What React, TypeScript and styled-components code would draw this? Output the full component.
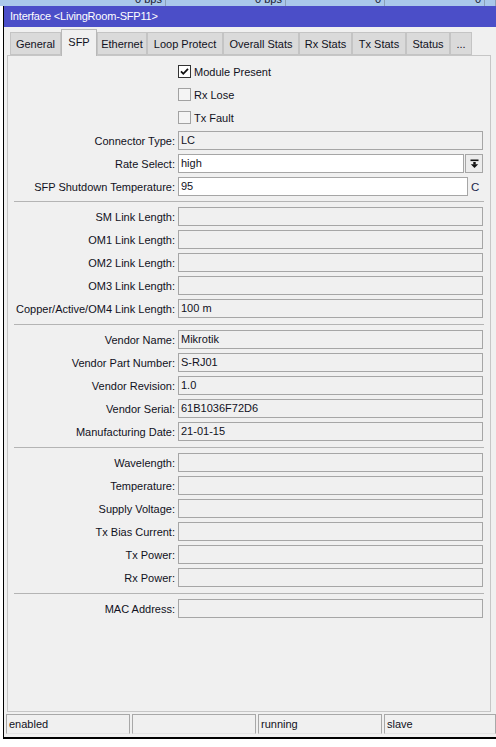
import React from "react";
import styled, { createGlobalStyle } from "styled-components";

const GlobalStyle = createGlobalStyle`
  html, body {
    margin: 0;
    padding: 0;
    background: #ffffff;
  }
  body {
    font-family: "Liberation Sans", Arial, sans-serif;
    font-size: 11px;
    color: #111122;
  }
`;

type Field = { label: string; value?: string; editable?: boolean; kind?: "select" | "unit"; unit?: string };

const checks = [
  { label: "Module Present", checked: true },
  { label: "Rx Lose", checked: false },
  { label: "Tx Fault", checked: false },
];

const groups: Field[][] = [
  [
    { label: "Connector Type", value: "LC" },
    { label: "Rate Select", value: "high", editable: true, kind: "select" },
    { label: "SFP Shutdown Temperature", value: "95", editable: true, kind: "unit", unit: "C" },
  ],
  [
    { label: "SM Link Length" },
    { label: "OM1 Link Length" },
    { label: "OM2 Link Length" },
    { label: "OM3 Link Length" },
    { label: "Copper/Active/OM4 Link Length", value: "100 m" },
  ],
  [
    { label: "Vendor Name", value: "Mikrotik" },
    { label: "Vendor Part Number", value: "S-RJ01" },
    { label: "Vendor Revision", value: "1.0" },
    { label: "Vendor Serial", value: "61B1036F72D6" },
    { label: "Manufacturing Date", value: "21-01-15" },
  ],
  [
    { label: "Wavelength" },
    { label: "Temperature" },
    { label: "Supply Voltage" },
    { label: "Tx Bias Current" },
    { label: "Tx Power" },
    { label: "Rx Power" },
  ],
  [{ label: "MAC Address" }],
];

// space above each group's divider line (first group has none)
const sepHeights = [0, 7, 8, 8, 8];

const tabs = [
  { name: "General", w: 51 },
  { name: "SFP", w: 36 },
  { name: "Ethernet", w: 50 },
  { name: "Loop Protect", w: 76 },
  { name: "Overall Stats", w: 76 },
  { name: "Rx Stats", w: 53 },
  { name: "Tx Stats", w: 54 },
  { name: "Status", w: 44 },
  { name: "...", w: 22 },
];

const backCells = [
  { w: 166, text: "0 bps" },
  { w: 120, text: "0 bps" },
  { w: 99, text: "0" },
  { w: 100, text: "0" },
  { w: 11, text: "" },
];

const statusCells = ["enabled", "", "running", "slave"];

const App: React.FC = () => {
  return (
    <Page>
      <GlobalStyle />
      <BackStrip>
        {backCells.map((c, i) => (
          <BackCell key={i} $w={c.w}>
            <span>{c.text}</span>
          </BackCell>
        ))}
      </BackStrip>
      <Window>
        <TitleBar>Interface &lt;LivingRoom-SFP11&gt;</TitleBar>
        <TabStrip>
          {tabs.map((t) => (
            <Tab key={t.name} $w={t.w} $active={t.name === "SFP"}>
              {t.name}
            </Tab>
          ))}
        </TabStrip>
        <Panel>
          {checks.map((c) => (
            <CheckRow key={c.label}>
              <CheckBox $checked={c.checked}>
                {c.checked && (
                  <svg width="11" height="11" viewBox="0 0 11 11">
                    <path d="M2 5.4 L4.3 7.8 L9 2.8" fill="none" stroke="#111" strokeWidth="1.8" />
                  </svg>
                )}
              </CheckBox>
              <CheckLabel>{c.label}</CheckLabel>
            </CheckRow>
          ))}
          {groups.map((g, gi) => (
            <React.Fragment key={gi}>
              {gi > 0 && <Separator $h={sepHeights[gi]} />}
              {g.map((f) => (
                <FormRow key={f.label}>
                  <Label>{f.label}:</Label>
                  <FieldWrap>
                    <Input $editable={!!f.editable}>{f.value}</Input>
                    {f.kind === "select" && (
                      <DropButton>
                        <svg width="9" height="10" viewBox="0 0 9 10">
                          <rect x="0.5" y="0.5" width="8" height="1.6" fill="#111" />
                          <rect x="3.3" y="3" width="2.4" height="2.5" fill="#111" />
                          <path d="M0.8 5.2 L8.2 5.2 L4.5 9 Z" fill="#111" />
                        </svg>
                      </DropButton>
                    )}
                    {f.kind === "unit" && <Unit>{f.unit}</Unit>}
                  </FieldWrap>
                </FormRow>
              ))}
            </React.Fragment>
          ))}
        </Panel>
        <StatusBar>
          {statusCells.map((s, i) => (
            <StatusCell key={i}>{s}</StatusCell>
          ))}
        </StatusBar>
      </Window>
    </Page>
  );
};

export default App;

const Page = styled.div`
  width: 496px;
  height: 747px;
  overflow: hidden;
  background: #ffffff;
`;

const BackStrip = styled.div`
  display: flex;
  height: 6px;
  overflow: hidden;
  background: #aac8ea;
`;

const BackCell = styled.div<{ $w: number }>`
  flex: 0 0 ${(p) => p.$w}px;
  box-sizing: border-box;
  border-right: 1px solid #8aa0b8;
  text-align: right;
  padding-right: 3px;
  overflow: hidden;

  span {
    display: block;
    margin-top: -7px;
    line-height: 12px;
    color: #202030;
  }
`;

const Window = styled.div`
  margin-left: 3px;
  border-left: 1px solid #000000;
  border-bottom: 2px solid #000000;
  background: #f0f0f0;
  display: flex;
  flex-direction: column;
`;

const TitleBar = styled.div`
  height: 21px;
  line-height: 21px;
  padding-left: 6px;
  background: #4b4ec8;
  color: #ffffff;
  font-size: 11px;
  letter-spacing: -0.2px;
`;

const TabStrip = styled.div`
  display: flex;
  align-items: flex-end;
  height: 29px;
  padding-left: 6px;
  margin-bottom: -1px;
  position: relative;
  z-index: 1;
`;

const Tab = styled.div<{ $w: number; $active: boolean }>`
  box-sizing: border-box;
  width: ${(p) => p.$w}px;
  height: ${(p) => (p.$active ? 27 : 23)}px;
  margin-bottom: ${(p) => (p.$active ? 0 : 1)}px;
  display: flex;
  align-items: center;
  justify-content: center;
  padding-bottom: ${(p) => (p.$active ? 3 : 0)}px;
  background: ${(p) => (p.$active ? "#f0f0f0" : "#dadada")};
  border: 1px solid ${(p) => (p.$active ? "#b8b8b8" : "#c4c4c4")};
  border-bottom: ${(p) => (p.$active ? "none" : "1px solid #c4c4c4")};
  white-space: nowrap;
`;

const Panel = styled.div`
  box-sizing: border-box;
  height: 657px;
  margin: 0 5px 0 3px;
  padding-top: 4px;
  border: 1px solid #c6c6c6;
  background: #f0f0f0;
`;

const CheckRow = styled.div`
  display: flex;
  align-items: center;
  height: 23px;
  padding-left: 170px;
`;

const CheckBox = styled.div<{ $checked: boolean }>`
  box-sizing: border-box;
  width: 13px;
  height: 13px;
  display: flex;
  align-items: center;
  justify-content: center;
  border: 1px solid ${(p) => (p.$checked ? "#333333" : "#a2a2a2")};
  background: ${(p) => (p.$checked ? "#ffffff" : "#f4f4f4")};
`;

const CheckLabel = styled.span`
  margin-left: 3px;
`;

const FormRow = styled.div`
  display: flex;
  align-items: center;
  height: 23px;
`;

const Label = styled.div`
  width: 167px;
  text-align: right;
  white-space: nowrap;
`;

const FieldWrap = styled.div`
  display: flex;
  align-items: center;
  width: 305px;
  margin-left: 3px;
`;

const Input = styled.div<{ $editable: boolean }>`
  flex: 1;
  box-sizing: border-box;
  height: 19px;
  line-height: 17px;
  padding-left: 2px;
  border: 1px solid #a6a6a6;
  background: ${(p) => (p.$editable ? "#ffffff" : "#f0f0f0")};
  white-space: nowrap;
  overflow: hidden;
`;

const DropButton = styled.div`
  box-sizing: border-box;
  width: 18px;
  height: 19px;
  margin-left: 1px;
  display: flex;
  align-items: center;
  justify-content: center;
  border: 1px solid #a6a6a6;
  background: #ececec;
`;

const Unit = styled.span`
  width: 12px;
  margin-left: 2px;
  padding-left: 1px;
  color: #1a1f4a;
  font-size: 11.5px;
`;

const Separator = styled.div<{ $h: number }>`
  height: ${(p) => p.$h}px;
  display: flex;
  align-items: center;
  padding: 0 6px;

  &::after {
    content: "";
    flex: 1;
    height: 1px;
    background: #b4b4b4;
  }
`;

const StatusBar = styled.div`
  display: grid;
  grid-template-columns: 124px 124px 124px 1fr;
  gap: 2px;
  margin: 2px 0 3px 2px;
  height: 20px;
`;

const StatusCell = styled.div`
  box-sizing: border-box;
  height: 20px;
  line-height: 18px;
  padding-left: 2px;
  border: 1px solid #a8a8a8;
  border-bottom-color: #e4e4e4;
  white-space: nowrap;
  overflow: hidden;
`;
